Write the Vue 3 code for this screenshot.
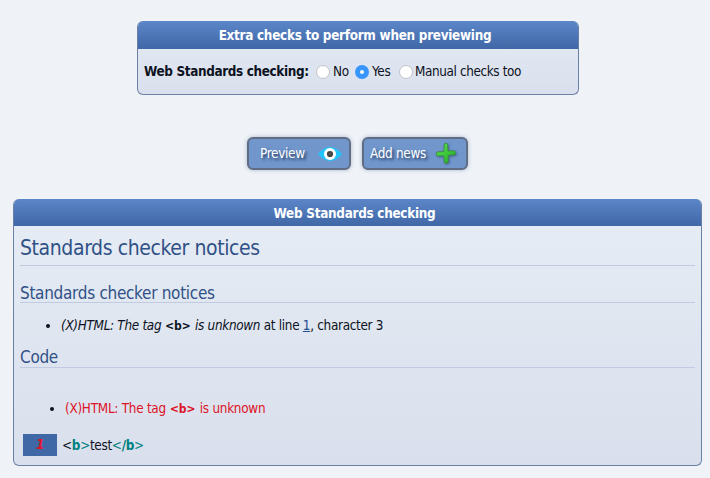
<script setup>
const options = [
  { label: 'No', checked: false },
  { label: 'Yes', checked: true },
  { label: 'Manual checks too', checked: false },
]
</script>

<template>
  <main class="page">
    <section class="panel checks">
      <h3 class="bar"><span class="t-extra">Extra checks to perform when previewing</span></h3>
      <div class="row">
        <b class="legend">Web Standards checking:</b>
        <label v-for="(o, i) in options" :key="o.label" class="opt" :class="'o' + i">
          <i class="radio" :class="{ on: o.checked }"></i><span>{{ o.label }}</span>
        </label>
      </div>
    </section>

    <div class="buttons">
      <button class="btn preview">
        <span>Preview</span>
        <svg width="24" height="16" viewBox="0 0 24 16">
          <path d="M0 8Q6 1 12 1T24 8Q18 15 12 15T0 8Z" fill="#20c4fb" />
          <circle cx="12" cy="8" r="6" fill="#fff" />
          <circle cx="12" cy="8" r="3.1" fill="#444" />
          <circle cx="12" cy="8" r=".5" fill="#aaa" />
        </svg>
      </button>
      <button class="btn add">
        <span>Add news</span>
        <svg width="22" height="23" viewBox="0 0 22 23">
          <defs>
            <linearGradient id="leaf" x1="0" y1="0" x2="1" y2="1">
              <stop offset="0" stop-color="#62df58" />
              <stop offset=".55" stop-color="#3bc638" />
              <stop offset="1" stop-color="#239d2b" />
            </linearGradient>
          </defs>
          <path d="M9.2 2Q11 .4 12.6 2L13 9 19.4 8.8Q21.6 10.5 20 12.8L13.2 13.3 13.3 20Q11.6 22.2 9.3 20.7L8.8 13.8 2.4 14Q.2 12.2 1.8 10L8.8 9.5Z" fill="url(#leaf)" stroke="#37883f" stroke-width=".8" />
        </svg>
      </button>
    </div>

    <section class="panel results">
      <h3 class="bar"><span class="t-web">Web Standards checking</span></h3>
      <div class="content">
        <h1><span>Standards checker notices</span></h1>
        <h2 class="notices"><span>Standards checker notices</span></h2>
        <ul class="list">
          <li><span><em>(X)HTML: The tag <code>&lt;b&gt;</code> is unknown</em> at line <a>1</a>, character 3</span></li>
        </ul>
        <h2 class="code-title"><span>Code</span></h2>
        <ul class="list errors">
          <li><span>(X)HTML: The tag <code>&lt;b&gt;</code> is unknown</span></li>
        </ul>
        <div class="line">
          <span class="num">1</span>
          <span class="src">&lt;<b>b</b><i>&gt;</i>test<i>&lt;</i><b>/b</b><i>&gt;</i></span>
        </div>
      </div>
    </section>
  </main>
</template>

<style>
body {
  background: #eff3f8;
}
</style>

<style scoped>
.page {
  box-sizing: border-box;
  width: 710px;
  height: 478px;
  padding: 21px 8px 0 13px;
  overflow: hidden;
  font: 13.4px/18px "DejaVu Sans Condensed", "DejaVu Sans", sans-serif;
  font-stretch: condensed;
  letter-spacing: -0.3px;
  color: #0c1222;
  white-space: nowrap;
}
h1, h2, h3, ul { margin: 0; padding: 0; font-weight: normal; }
.panel {
  box-sizing: border-box;
  border: 1px solid #6b80a6;
  border-top: 0;
  border-radius: 6px;
  overflow: hidden;
  background: linear-gradient(#e7edf5, #d9dfec);
}
.bar {
  box-sizing: border-box;
  display: flex;
  justify-content: center;
  align-items: center;
  height: 28px;
  padding: 2px 6px 0 0;
  background: linear-gradient(#5b86c8, #4067a6);
  color: #fff;
  font-size: 13.4px;
  font-weight: bold;
}
.t-extra { letter-spacing: -0.28px; }
.t-web { letter-spacing: -0.28px; }
.checks { width: 442px; height: 74px; margin-left: 124px; }
.row { display: flex; align-items: center; height: 44px; padding: 1px 0 0 6px; }
.legend { width: 172px; letter-spacing: -0.35px; }
.opt { display: flex; align-items: center; gap: 3px; }
.o0 { width: 39px; }
.o1 { width: 44px; }
.o2 { gap: 2px; letter-spacing: -0.38px; }
.radio {
  box-sizing: border-box;
  flex: none;
  width: 14px;
  height: 14px;
  border: 1px solid #bfc2c8;
  border-radius: 50%;
  background: #fff;
}
.radio.on { border: 5px solid #3795fb; }
.buttons { display: flex; gap: 11px; padding: 42px 0 0 234px; }
.btn {
  box-sizing: border-box;
  display: flex;
  align-items: center;
  height: 33px;
  padding: 0;
  border: 2px solid #606d85;
  border-radius: 6px;
  background: #7096cc;
  box-shadow: 0 0 4px #a9b5c8;
  color: #fff;
  font: inherit;
  letter-spacing: inherit;
  text-shadow: 2px 2px 3px #24375b;
}
.btn span { flex: none; }
.btn svg { flex: none; }
.preview { width: 104px; padding-left: 11px; }
.preview span { width: 58px; text-align: left; }
.add { width: 106px; padding-left: 6px; }
.add span { width: 65px; text-align: left; }
.add svg { filter: drop-shadow(1px 1px 1px #4a668f); }
.results { width: 689px; height: 267px; margin-top: 29px; }
.results .bar { height: 27px; }
.content { padding: 0 6px; }
h1, h2 { box-sizing: border-box; color: #305186; border-bottom: 1px solid #c0cbe2; }
h1 { height: 40px; padding-top: 8px; font-size: 21px; line-height: 28px; letter-spacing: -0.4px; }
h2 { font-size: 17px; line-height: 22px; }
.notices { height: 37px; padding-top: 16px; }
.list { padding-left: 41px; height: 18px; margin-top: 14px; letter-spacing: -0.3px; }
.list li { padding: 0; }
code { font: bold 13px/14px "DejaVu Sans Mono", monospace; letter-spacing: 0.4px; font-style: normal; margin: 0 1px; }
a { color: #244c8c; text-decoration: underline; }
.code-title { height: 22px; margin-top: 11px; padding-top: 1px; line-height: 21px; }
.errors { padding-left: 45px; margin-top: 32px; letter-spacing: -0.26px; }
.errors span { color: #dc1427; }
.line { display: flex; align-items: center; margin: 16px 0 0 3px; height: 22px; }
.num {
  width: 34px;
  margin-right: 5px;
  background: #4067a6;
  color: #e0142a;
  font-weight: bold;
  font-style: italic;
  text-align: center;
  line-height: 22px;
}
.src { padding-top: 1px; }
.src i, .src b { color: #008080; font-style: normal; }
</style>
